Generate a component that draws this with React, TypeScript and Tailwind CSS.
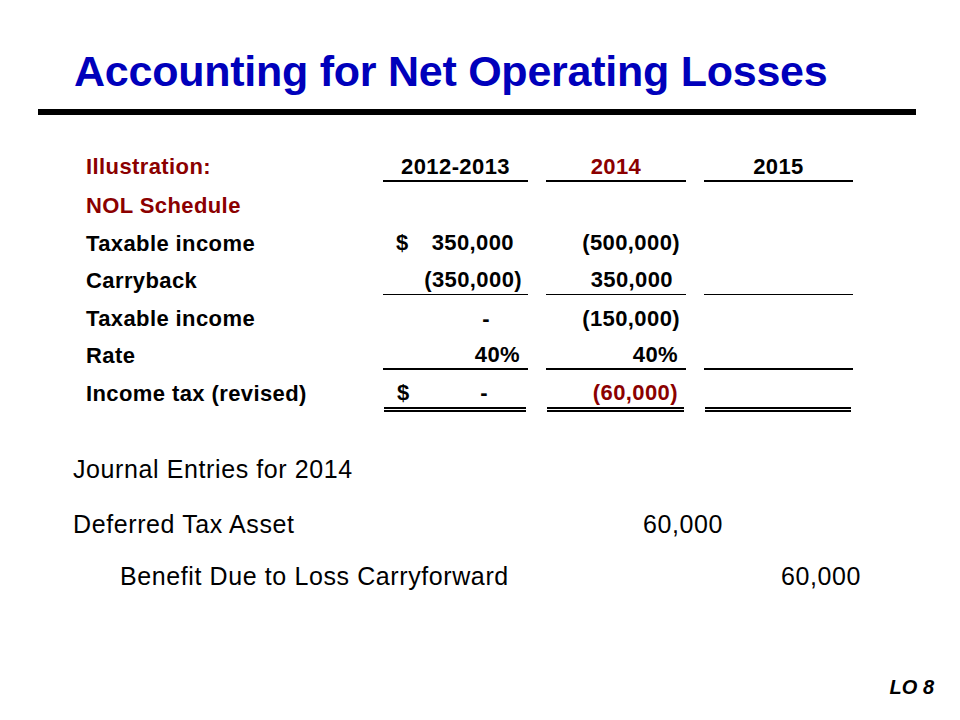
import React from "react";

type Cell = {
  text?: string;
  dollar?: boolean;
  pr: string;
  red?: boolean;
};

const RED = "text-[#8b0000]";

function ValueCell({
  cell,
  width,
  line,
}: {
  cell?: Cell;
  width: string;
  line?: "single" | "thick" | "double";
}) {
  const border =
    line === "single"
      ? "h-[34px] border-b border-black"
      : line === "thick"
      ? "h-[34px] border-b-2 border-black"
      : line === "double"
      ? "h-[38px] border-b-[5px] border-double border-black ml-[1px] mr-[2px]"
      : "h-[34px]";
  return (
    <div className={`${width} shrink-0 self-start`}>
      <div className={`${border} pt-[6px] flex items-center`}>
        {cell?.dollar && <span className="pl-[13px]">$</span>}
        <span className={`ml-auto ${cell?.pr ?? ""} ${cell?.red ? RED : ""}`}>{cell?.text}</span>
      </div>
    </div>
  );
}

const rows: {
  label: string;
  red?: boolean;
  cols: (Cell | undefined)[];
  line?: "single" | "thick" | "double";
}[] = [
  { label: "NOL Schedule", red: true, cols: [undefined, undefined, undefined] },
  {
    label: "Taxable income",
    cols: [{ text: "350,000", dollar: true, pr: "pr-[14px]" }, { text: "(500,000)", pr: "pr-[6px]" }, undefined],
  },
  {
    label: "Carryback",
    cols: [{ text: "(350,000)", pr: "pr-[6px]" }, { text: "350,000", pr: "pr-[13px]" }, undefined],
    line: "single",
  },
  {
    label: "Taxable income",
    cols: [{ text: "-", pr: "pr-[38px]" }, { text: "(150,000)", pr: "pr-[6px]" }, undefined],
  },
  {
    label: "Rate",
    cols: [{ text: "40%", pr: "pr-[8px]" }, { text: "40%", pr: "pr-[8px]" }, undefined],
    line: "thick",
  },
  {
    label: "Income tax (revised)",
    cols: [{ text: "-", dollar: true, pr: "pr-[38px]" }, { text: "(60,000)", pr: "pr-[6px]", red: true }, undefined],
    line: "double",
  },
];

const widths = ["w-[145px]", "w-[140px]", "w-[149px]"];

export default function App() {
  return (
    <div className="w-[960px] h-[720px] bg-white flex flex-col font-['Liberation_Sans',Arial,sans-serif] text-black overflow-hidden pt-[50px]">
      {/* Title */}
      <div className="pl-[74px] text-[43px] leading-none font-bold tracking-[-0.25px] text-[#0000bb]">
        Accounting for Net Operating Losses
      </div>
      <div className="ml-[38px] mt-[16px] w-[878px] h-[6px] bg-black" />

      {/* NOL schedule */}
      <div className="mt-[33.2px] pl-[86px] text-[22px] font-bold tracking-[0.4px] leading-none">
        <div className="flex h-[37.6px] gap-[18px]">
          <div className={`w-[279px] shrink-0 flex items-center ${RED}`}>Illustration:</div>
          {["2012-2013", "2014", "2015"].map((h, i) => (
            <div key={h} className={`${widths[i]} shrink-0 self-start`}>
              <div className="h-[34px] border-b-2 border-black pt-[5px] flex items-center justify-center">
                <span className={i === 1 ? RED : ""}>{h}</span>
              </div>
            </div>
          ))}
        </div>
        {rows.map((r, ri) => (
          <div key={ri} className="flex h-[37.6px] gap-[18px]">
            <div className={`w-[279px] shrink-0 flex items-center pt-[3px] ${r.red ? RED : ""}`}>{r.label}</div>
            {r.cols.map((c, i) => (
              <ValueCell key={i} cell={c} width={widths[i]} line={r.line} />
            ))}
          </div>
        ))}
      </div>

      {/* Journal entries */}
      <div className="text-[25px] leading-none tracking-[0.6px]">
        <div className="mt-[45.3px] pl-[73px]">Journal Entries for 2014</div>
        <div className="mt-[30px] pl-[73px] flex">
          <span className="w-[570px] shrink-0">Deferred Tax Asset</span>
          <span>60,000</span>
        </div>
        <div className="mt-[27px] pl-[120px] flex">
          <span className="w-[661px] shrink-0">Benefit Due to Loss Carryforward</span>
          <span>60,000</span>
        </div>
      </div>

      <div className="mt-auto pb-[23px] pr-[26px] flex justify-end text-[20px] leading-none font-bold italic">
        LO 8
      </div>
    </div>
  );
}
